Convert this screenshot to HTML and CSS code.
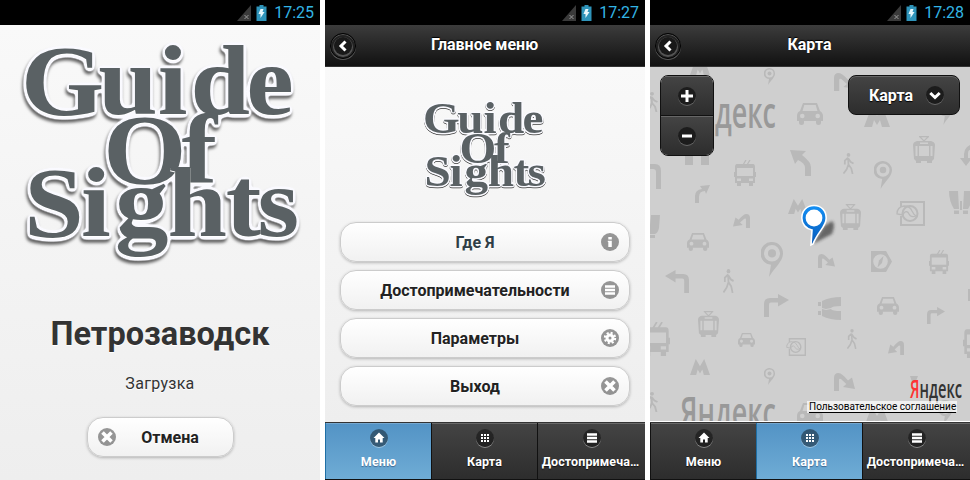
FILE: index.html
```html
<!DOCTYPE html>
<html lang="ru">
<head>
<meta charset="utf-8">
<title>Guide Of Sights</title>
<link rel="stylesheet" href="styles.css">
</head>
<body>
<svg class="defs" width="0" height="0" aria-hidden="true">
  <defs>
    <filter id="halo" x="-10%" y="-10%" width="120%" height="120%" color-interpolation-filters="sRGB">
      <feGaussianBlur in="SourceAlpha" stdDeviation="2.2" result="soft"/>
      <feComponentTransfer in="soft" result="fat"><feFuncA type="linear" slope="9" intercept="-0.4"/></feComponentTransfer>
      <feFlood flood-color="#fafaff"/>
      <feComposite in2="fat" operator="in" result="edge"/>
      <feGaussianBlur in="fat" stdDeviation="1.8"/>
      <feOffset dx="-1" dy="2.5" result="drop"/>
      <feFlood flood-color="#000" flood-opacity=".6"/>
      <feComposite in2="drop" operator="in" result="shade"/>
      <feMerge><feMergeNode in="shade"/><feMergeNode in="edge"/><feMergeNode in="SourceGraphic"/></feMerge>
    </filter>
    <linearGradient id="pinfill" x1="0" y1="0" x2="0" y2="1"><stop offset="0" stop-color="#1490f5"/><stop offset="1" stop-color="#0558b8"/></linearGradient>
    <filter id="blur"><feGaussianBlur stdDeviation="1.6"/></filter>

    <symbol id="logo" viewBox="14 34 292 242">
      <g class="logo-text" filter="url(#halo)">
        <g transform="scale(1.08 1)">
          <text x="19.500 91 146 176.500 228" y="114.500">Guide</text>
          <text x="95.500 168" y="183">Of</text>
          <text x="22.500 75 106.500 155 209 238.500" y="236">Sights</text>
        </g>
      </g>
    </symbol>
    <symbol id="signal" viewBox="0 0 14 16"><path d="M14 0V16H0Z" fill="#3a3a3a"/><path d="M7.500 10l4 4m0-4l-4 4" stroke="#999" stroke-width="1"/></symbol>
    <symbol id="battery" viewBox="0 0 10 16"><path d="M3 0h4v1.500h3V16H0V1.500h3z" fill="#2f94ba"/><path d="M4 4h3L6 7h2l-4 6V9H2z" fill="#e8f7fc"/></symbol>
    <symbol id="i-back" viewBox="0 0 18 18"><path d="M11.500 4.500L7 9l4.500 4.500" fill="none" stroke="#fff" stroke-width="3"/></symbol>
    <symbol id="i-down" viewBox="0 0 18 18"><path d="M4.300 7L9 11.500 13.700 7" fill="none" stroke="#fff" stroke-width="3"/></symbol>
    <symbol id="i-plus" viewBox="0 0 18 18"><path d="M3 9h12M9 3v12" stroke="#fff" stroke-width="3"/></symbol>
    <symbol id="i-minus" viewBox="0 0 18 18"><path d="M4 9h10" stroke="#fff" stroke-width="3"/></symbol>
    <symbol id="i-x" viewBox="0 0 18 18"><path d="M4.500 4.500l9 9m0-9l-9 9" stroke="#fff" stroke-width="3.600"/></symbol>
    <symbol id="i-info" viewBox="0 0 18 18"><path d="M7.300 4h3.500v2.500H7.300zM6.800 7.800h4V14H7.300V9h-.5z" fill="#fff"/></symbol>
    <symbol id="i-bars" viewBox="0 0 18 18"><path d="M4 5.500h10M4 9h10M4 12.500h10" stroke="#fff" stroke-width="2.300"/></symbol>
    <symbol id="i-grid" viewBox="0 0 18 18"><path d="M5 6h8M5 9h8M5 12h8" stroke="#fff" stroke-width="2" stroke-dasharray="2 1"/></symbol>
    <symbol id="i-home" viewBox="0 0 18 18"><path d="M9 3.500L3.500 9H5.300V13.500H8V10.500h2v3h2.700V9h1.800z" fill="#fff"/></symbol>
    <symbol id="i-gear" viewBox="0 0 18 18"><circle cx="9" cy="9" r="3" fill="none" stroke="#fff" stroke-width="3"/><circle cx="9" cy="9" r="5.200" fill="none" stroke="#fff" stroke-width="2" stroke-dasharray="2.100 1.984"/></symbol>

    <symbol id="car" viewBox="0 0 26 22" preserveAspectRatio="none"><path fill-rule="evenodd" d="M6 0h14l3 8c2 1 3 3 3 5v5h-2v2q0 2-2.500 2T19 20v-2H7v2q0 2-2.500 2T2 20v-2H0v-5q0-4 3-5zM7.300 2L5.500 8h15L18.700 2zM3 13a2.300 2.300 0 1 0 4.600 0A2.300 2.300 0 1 0 3 13M18.400 13a2.300 2.300 0 1 0 4.600 0 2.300 2.300 0 1 0-4.600 0"/></symbol>
    <symbol id="metro" viewBox="0 0 26 20" preserveAspectRatio="none"><path d="M0 20L7.500 0 13 9 18.500 0 26 20h-8l-2-7-3 5-3-5-2 7z"/></symbol>
    <symbol id="place" viewBox="0 0 22 34" preserveAspectRatio="none"><path fill-rule="evenodd" d="M11 0a11 11 0 0 1 11 11c0 8-8 13-14 23l2-12A11 11 0 0 1 11 0zm0 3a8 8 0 1 0 0 16 8 8 0 0 0 0-16"/><circle cx="11" cy="11" r="4"/></symbol>
    <symbol id="trolley" viewBox="0 0 22 26" preserveAspectRatio="none"><path d="M9 5l3-5m1 5l3-5" fill="none" stroke="#b9b9b9" stroke-width="1.300"/><path fill-rule="evenodd" d="M3 4h16q2 0 2 3v5h1v5h-1v6h-2v3h-4v-3H7v3H3v-3H1v-6H0v-5h1V7q0-3 2-3zm0 4v8h16V8zm0 10.500v2.500h4v-2.500zm12 0v2.500h4v-2.500z"/></symbol>
    <symbol id="tram" viewBox="0 0 22 28" preserveAspectRatio="none"><path d="M6 .7h10M7 1l4 4 4-4" fill="none" stroke="#b9b9b9" stroke-width="1.200"/><path fill-rule="evenodd" d="M4 5h14q4 1 4 4l-1 14-2 2v2h-5v-2H8v2H3v-2l-2-2L0 9q0-3 4-4zm3 1.500v1.500h8V6.500zM2.500 10v10h2V10zm3.500 0v10h10V10zm11.500 0v10h2V10z"/></symbol>
    <symbol id="walk" viewBox="0 0 12 22" preserveAspectRatio="none"><circle cx="6" cy="2" r="2"/><path d="M5.500 5L6 12l3 4 1.500 6M6 12l-2 5-3.500 4.500M5.500 5L2 8v4M6 6l2.500 3.500L11.500 11" fill="none" stroke="#b9b9b9" stroke-width="1.900"/></symbol>
    <symbol id="turn" viewBox="0 0 25 23" preserveAspectRatio="none"><path d="M0 23V10q0-6 6-6h8V0l11 6-11 6.500V8.500H7q-2 0-2 2V23z"/></symbol>
    <symbol id="bend" viewBox="0 0 21 18" preserveAspectRatio="none"><path d="M0 18V5Q0 0 4.500 0 8 0 14 7.500l4-3L21 16 9 14l3.300-3L7 6q-2-1-2 1v11z"/></symbol>
    <symbol id="shoes" viewBox="0 0 24 23" preserveAspectRatio="none"><path d="M0 0h9l1 18H5Q0 10 0 0zM15 0h9q0 10-5 18h-5zM5 19.500h5V23H5zM14 19.500h5V23h-5zM11 10h1v9h-1zm2 0h-1v9h1z"/></symbol>
    <symbol id="globe" viewBox="0 0 29 25" preserveAspectRatio="none"><g fill="none" stroke="#b9b9b9" stroke-width="2"><path d="M5 6V1h23v23H5v-9"/><circle cx="14" cy="12.500" r="7.500"/><path d="M1 13q0-7 7-8 6 0 8 5 2 4 4 5-5 2-7-2-2-4-5-1-1 1-1 2z" stroke-width="1.300"/></g></symbol>
    <symbol id="compass" viewBox="0 0 21 21" preserveAspectRatio="none"><path fill-rule="evenodd" d="M0 0h15l6 10.500L15 21H0zM2.200 10.500a7.300 7.300 0 0 0 14.600 0 7.300 7.300 0 0 0-14.600 0"/><path d="M12.500 5l-1.500 7-4.500 4.500 1.500-7z"/></symbol>
  </defs>
</svg>

<main class="screens">
  <section class="screen">
    <div class="status"><svg class="signal"><use href="#signal"/></svg><svg class="battery"><use href="#battery"/></svg><span>17:25</span></div>
    <div class="page splash">
      <svg class="logo-big"><use href="#logo"/></svg>
      <h1>Петрозаводск</h1>
      <p>Загрузка</p>
      <a class="btn cancel"><svg class="ico"><use href="#i-x"/></svg><span>Отмена</span></a>
    </div>
  </section>

  <section class="screen">
    <div class="status"><svg class="signal"><use href="#signal"/></svg><svg class="battery"><use href="#battery"/></svg><span>17:27</span></div>
    <header class="bar"><a class="back"><svg class="ico"><use href="#i-back"/></svg></a><h2>Главное меню</h2></header>
    <div class="page menu">
      <svg class="logo-small"><use href="#logo"/></svg>
      <a class="btn hot"><span>Где Я</span><svg class="ico"><use href="#i-info"/></svg></a>
      <a class="btn"><span>Достопримечательности</span><svg class="ico"><use href="#i-bars"/></svg></a>
      <a class="btn"><span>Параметры</span><svg class="ico"><use href="#i-gear"/></svg></a>
      <a class="btn"><span>Выход</span><svg class="ico"><use href="#i-x"/></svg></a>
    </div>
    <nav class="tabs">
      <a class="tab active"><svg class="ico"><use href="#i-home"/></svg><span>Меню</span></a>
      <a class="tab"><svg class="ico"><use href="#i-grid"/></svg><span>Карта</span></a>
      <a class="tab"><svg class="ico"><use href="#i-bars"/></svg><span>Достопримеча…</span></a>
    </nav>
  </section>

  <section class="screen">
    <div class="status"><svg class="signal"><use href="#signal"/></svg><svg class="battery"><use href="#battery"/></svg><span>17:28</span></div>
    <header class="bar"><a class="back"><svg class="ico"><use href="#i-back"/></svg></a><h2>Карта</h2></header>
    <div class="map">
      <svg class="tiles" viewBox="0 67 320 354">
        <g fill="#b9b9b9">
          <use href="#metro" x="40" y="59" width="20" height="16"/>
          <use href="#metro" x="138" y="199" width="20" height="15"/>
          <use href="#metro" x="40" y="359" width="20" height="16"/>
          <use href="#metro" x="214" y="107" width="26" height="20"/>
          <use href="#metro" x="214" y="407" width="26" height="20"/>
          <use href="#place" x="114" y="68" width="11" height="17"/>
          <use href="#place" x="114" y="368" width="11" height="17"/>
          <use href="#place" x="224" y="161" width="18" height="28"/>
          <use href="#place" x="111" y="242" width="22" height="35"/>
          <use href="#place" x="288" y="100" width="15" height="25"/>
          <use href="#place" x="288" y="400" width="15" height="25"/>
          <use href="#car" x="147" y="103" width="26" height="22"/>
          <use href="#car" x="147" y="403" width="26" height="22"/>
          <use href="#car" x="37" y="233" width="22" height="18"/>
          <use href="#car" x="88" y="333" width="17" height="14"/>
          <use href="#car" x="227" y="297" width="22" height="18"/>
          <use href="#trolley" x="84" y="160" width="22" height="26"/>
          <use href="#trolley" x="279" y="250" width="20" height="24"/>
          <use href="#trolley" x="-9" y="322" width="29" height="34"/>
          <use href="#trolley" x="313" y="324" width="29" height="34"/>
          <use href="#tram" x="263" y="136" width="22" height="28"/>
          <use href="#tram" x="190" y="204" width="21" height="27"/>
          <use href="#tram" x="48" y="311" width="21" height="27"/>
          <use href="#walk" x="-4" y="92" width="12" height="20"/>
          <use href="#walk" x="-4" y="392" width="12" height="20"/>
          <use href="#walk" x="193" y="153" width="11" height="21"/>
          <use href="#walk" x="73" y="269" width="11" height="24"/>
          <use href="#walk" x="197" y="329" width="10" height="20"/>
          <use href="#turn" x="114" y="294" width="25" height="23"/>
          <use href="#turn" x="277" y="307" width="18" height="17"/>
          <g transform="translate(39 270) scale(-1 1)"><use href="#turn" width="24" height="23"/></g>
          <path d="M45 203v-7q0-6 7-7l-2-3 10-1-4 9-1-3q-6 0-6 6v6zM140 150l16 1-4 4q9 7 9 12v9h-6v-8q0-5-7-8l-3 4zM0 164h5q6 0 6 7v18H6v-17q0-3-3-3H0zM317 147l3-2v5q-2 0-2 4v4h4l-6 8-6-8h4v-4q0-4 3-7zM318 289h2v12h-2z"/>
          <use href="#bend" x="184" y="73" width="22" height="18"/>
          <use href="#bend" x="168" y="254" width="17" height="14"/>
          <use href="#bend" x="184" y="373" width="21" height="18"/>
          <g transform="translate(100 214) scale(-1 1)"><use href="#bend" width="17" height="14"/></g>
          <g transform="translate(254 341) scale(-1 1)"><use href="#bend" width="16" height="14"/></g>
          <use href="#shoes" x="299" y="191" width="24" height="23"/>
          <path d="M191 297v9q-9 0-10 2l-5 1-4-1v-7q8-4 19-4zM191 320v-9q-9 0-10-2l-5 1-4-1v7q8 4 19 4zM168 302h3v4h-3zM168 311h3v4h-3z"/>
          <path d="M1 215h9l-1 13q-1 5-4 6H0v-9zM0 235h5v3H0zM35 155h8v10h-8zM51 155h8v10h-8zM260 376h8l-2 5-4 1z"/>
          <use href="#globe" x="246" y="201" width="29" height="25"/>
          <use href="#globe" x="136" y="338" width="20" height="18"/>
          <use href="#compass" x="221" y="251" width="21" height="21"/>
        </g>
        <g class="watermark">
          <text x="30" y="128" textLength="96" lengthAdjust="spacingAndGlyphs">Яндекс</text>
          <text x="30" y="428" textLength="96" lengthAdjust="spacingAndGlyphs">Яндекс</text>
        </g>
        <path d="M163 244l19-10q4-10 0-13l-8 5z" fill="#222" opacity=".6" filter="url(#blur)"/>
        <path d="M164 205.500c7.200 0 12.200 5.300 12.200 12.500 0 9-8.200 13-13.200 26l-2 1 1-15c-6-1-10.200-6-10.200-12 0-7.200 5-12.500 12.200-12.500z" fill="url(#pinfill)" stroke="#fff" stroke-width="1.600"/>
        <circle cx="164" cy="218" r="8.400" fill="#fff"/>
        <text class="brand" x="260" y="398" textLength="52" lengthAdjust="spacingAndGlyphs"><tspan class="ya">Я</tspan>ндекс</text>
      </svg>
      <div class="zoomer"><a><svg class="ico"><use href="#i-plus"/></svg></a><a><svg class="ico"><use href="#i-minus"/></svg></a></div>
      <a class="layer"><span>Карта</span><svg class="ico"><use href="#i-down"/></svg></a>
      <a class="terms">Пользовательское соглашение</a>
    </div>
    <nav class="tabs">
      <a class="tab"><svg class="ico"><use href="#i-home"/></svg><span>Меню</span></a>
      <a class="tab active"><svg class="ico"><use href="#i-grid"/></svg><span>Карта</span></a>
      <a class="tab"><svg class="ico"><use href="#i-bars"/></svg><span>Достопримеча…</span></a>
    </nav>
  </section>
</main>
</body>
</html>
```
FILE: styles.css
```css
* { box-sizing: border-box; }
body { margin: 0; background: #fff; font-family: Roboto, "Noto Sans", sans-serif; }
.defs { position: absolute; }
.screens { display: flex; gap: 5px; width: 970px; height: 480px; overflow: hidden; }
.screen { width: 320px; height: 480px; display: flex; flex-direction: column; overflow: hidden; }
h1, h2, p { margin: 0; }
svg { display: block; flex: none; }

.status { height: 25px; flex: none; background: #000; color: #33b5e5; display: flex; justify-content: flex-end; align-items: center; padding-right: 6px; font-size: 16px; line-height: 25px; }
.signal { width: 14px; height: 16px; margin-right: 5px; }
.battery { width: 11px; height: 16px; margin-right: 7px; }

.page { flex: 1; display: flex; flex-direction: column; background: linear-gradient(#f9f9f9, #eee); }
.logo-text { font: bold 99px "Liberation Serif", serif; fill: #5a6164; }
.splash { align-items: center; color: #333; text-shadow: 0 1px 0 #fff; }
.logo-big { width: 292px; height: 242px; margin-top: 9px; }
.splash h1 { font-size: 32.500px; line-height: 38px; margin-top: 39px; }
.splash p { font-size: 16px; line-height: 20px; margin-top: 21px; letter-spacing: .3px; }

.btn { display: flex; align-items: center; height: 40px; flex: none; border: 1px solid #ccc; border-radius: 16px; background: linear-gradient(#fff, #f1f1f1); box-shadow: 0 1px 3px rgba(0,0,0,.25); color: #222; font-size: 16px; font-weight: bold; text-shadow: 0 1px 0 #fff; padding: 0 10px; }
.btn span { flex: 1; text-align: center; padding-right: 2px; }
.btn .ico { background: rgba(0,0,0,.4); }
.cancel { width: 147px; margin: 23px 0 0 1px; }
.cancel span { padding: 0 0 0 1px; }
.ico { width: 18px; height: 18px; border-radius: 50%; }

.bar { height: 42px; flex: none; display: flex; align-items: center; background: linear-gradient(#3c3c3c, #111); border-bottom: 1px solid #333; padding: 0 5px; color: #fff; }
.bar h2 { flex: 1; text-align: center; font-size: 16px; line-height: 40px; padding: 0 27px 2px 0; text-shadow: 0 -1px 1px #000; }
.back { width: 26px; height: 26px; border-radius: 50%; border: 1px solid #000; background: #222; display: grid; place-items: center; box-shadow: 0 1px 0 #555, inset 0 1px 0 #555; }
.back .ico { background: #191919; box-shadow: 0 1px 0 1px #555; }

.menu { padding: 30px 15px 0; gap: 8px; }
.logo-small { width: 129px; height: 107px; margin: 0 0 10px 80px; }
.hot { color: #2f3e46; }

.tabs { height: 58px; flex: none; display: grid; grid-template-columns: 106px 106px 108px; border-top: 1px solid #333; border-bottom: 1px solid #111; }
.tab { min-width: 0; display: flex; flex-direction: column; align-items: center; padding-top: 6px; background: linear-gradient(#444, #2d2d2d); border-left: 1px solid #111; box-shadow: inset 0 1px 0 rgba(255,255,255,.2); color: #fff; font-size: 12.500px; font-weight: bold; line-height: 16px; text-shadow: 0 1px 1px #111; white-space: nowrap; }
.tab .ico { background: rgba(0,0,0,.42); box-shadow: 0 1px 0 rgba(255,255,255,.4); margin-bottom: 7px; }
.tab span { letter-spacing: .1px; }
.tab:last-child { padding-right: 2px; }
.tab:last-child .ico { margin-left: 3px; }
.tab.active { background: linear-gradient(#5393c5, #6facd5); border-left-color: #1f6fa5; text-shadow: 0 1px 1px #3e6790; }

.map { height: 355px; flex: none; position: relative; background: #cfcfcf; border-bottom: 1px solid #fff; }
.tiles { width: 320px; height: 354px; }
.watermark { font: 600 44px "Open Sans", sans-serif; fill: #999; }
.brand { font: 600 25px "Open Sans", sans-serif; fill: #333; }
.ya { fill: #f33; }
.zoomer { position: absolute; left: 10px; top: 8px; width: 54px; height: 81px; border: 1px solid #111; border-radius: 8px; overflow: hidden; display: grid; grid-template-rows: 39px 40px; }
.zoomer a { display: grid; place-items: center; background: linear-gradient(#444, #2d2d2d); box-shadow: inset 0 1px 0 #666; }
.zoomer a + a { border-top: 1px solid #111; }
.zoomer .ico, .layer .ico { background: #1c1c1c; box-shadow: 0 1px 0 #666; }
.layer { position: absolute; left: 198px; top: 8px; width: 112px; height: 40px; display: flex; align-items: center; justify-content: flex-end; gap: 13px; padding-right: 15px; border: 1px solid #111; border-radius: 8px; background: linear-gradient(#444, #2d2d2d); box-shadow: inset 0 1px 0 #666; color: #fff; font-size: 16px; font-weight: bold; text-shadow: 0 1px 1px #000; }
.terms { position: absolute; left: 157px; top: 334px; height: 12px; padding: 0 1px 0 2px; background: rgba(255,255,255,.7); color: #000; font-size: 10px; line-height: 11px; text-decoration: underline; text-underline-offset: 2px; white-space: nowrap; }
```
